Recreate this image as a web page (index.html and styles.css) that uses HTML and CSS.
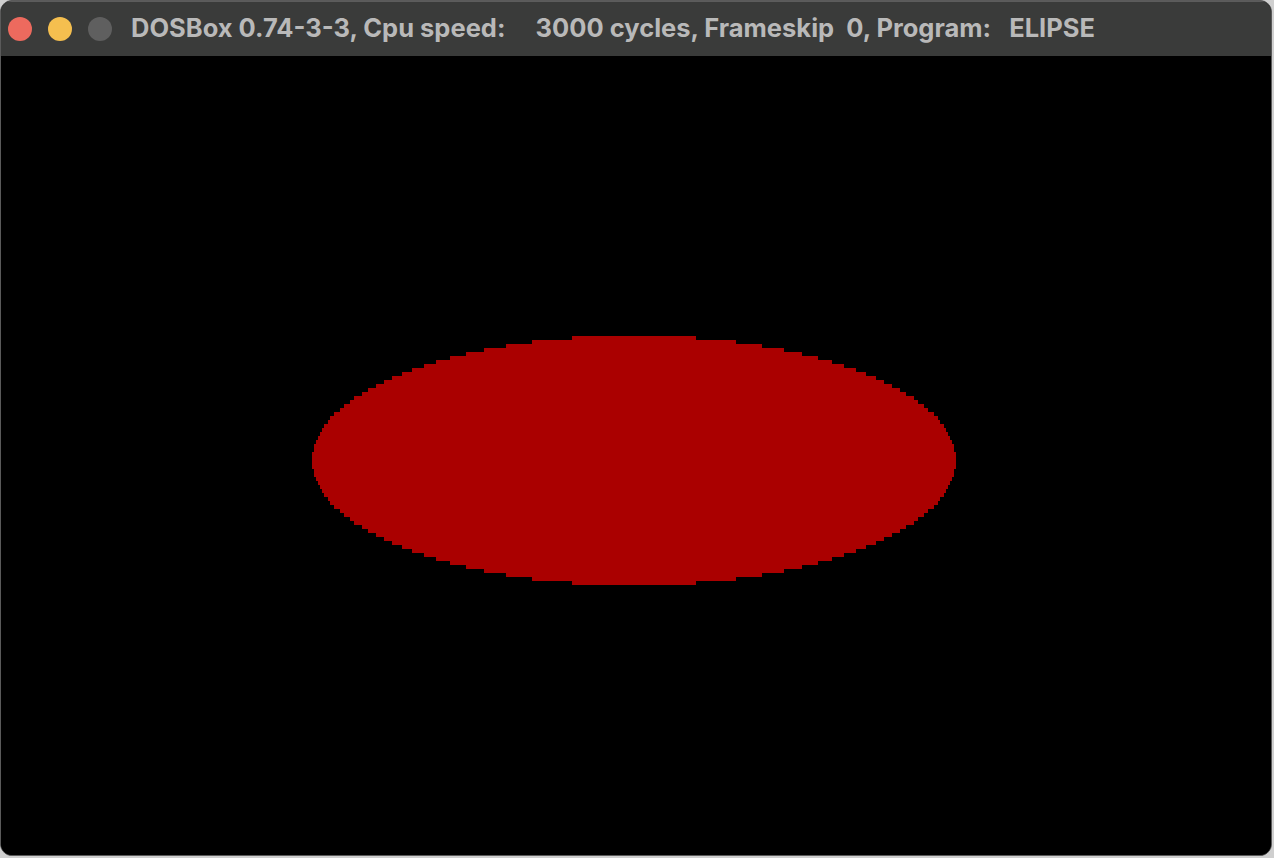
FILE: index.html
```html
<!DOCTYPE html>
<html>
<head>
<meta charset="utf-8">
<title>DOSBox</title>
<link rel="stylesheet" href="styles.css">
</head>
<body>
<div class="window">
  <div class="titlebar">
    <div class="lights">
      <span class="light close"></span>
      <span class="light min"></span>
      <span class="light zoom"></span>
    </div>
    <div class="title">DOSBox 0.74-3-3, Cpu speed:     3000 cycles, Frameskip  0, Program:   ELIPSE</div>
  </div>
  <div class="screen">
    <svg class="canvas" id="canvas" viewBox="1 56 1270 798" preserveAspectRatio="none" shape-rendering="crispEdges"></svg>
  </div>
</div>
<script src="script.js"></script>
</body>
</html>
```
FILE: styles.css
```css
html, body {
  margin: 0;
  padding: 0;
}
body {
  width: 1274px;
  height: 858px;
  background: #cfcfcf;
  overflow: hidden;
}
.window {
  width: 1272px;
  height: 856px;
  box-sizing: border-box;
  border: 1px solid #5a5a5a;
  border-radius: 12px;
  overflow: hidden;
  display: flex;
  flex-direction: column;
  background: #000;
}
.titlebar {
  height: 55px;
  flex: none;
  background: #3a3b3a;
  box-shadow: inset 0 1px 0 #5c5c5c;
  display: flex;
  align-items: center;
  padding-left: 7px;
  gap: 19px;
}
.lights {
  display: flex;
  gap: 16px;
}
.light {
  width: 24px;
  height: 24px;
  border-radius: 50%;
  display: block;
}
.close { background: #ed6a5e; }
.min { background: #f5bf4f; }
.zoom { background: #5f5f5f; }
.title {
  font-family: "Inter", "Open Sans", sans-serif;
  font-weight: 700;
  font-size: 25.5px;
  color: #b9b9b9;
  white-space: pre;
  margin-top: -3px;
}
.screen {
  flex: 1;
  position: relative;
  background: #000;
}
.canvas {
  position: absolute;
  left: 0;
  top: 0;
  width: 100%;
  height: 100%;
  display: block;
}
```
FILE: script.js
```js
(function () {
  var svg = document.getElementById('canvas');
  var ns = 'http://www.w3.org/2000/svg';
  var cx = 634, cy = 460, a = 322, b = 124.4;
  var d = '';
  for (var i = 0; i < 62; i++) {
    var y = 336 + 4 * i;
    var yc = y + 2 - cy;
    var t = 1 - (yc / b) * (yc / b);
    if (t <= 0) continue;
    var hw = Math.round(a * Math.sqrt(t) / 2) * 2;
    d += 'M' + (cx - hw) + ' ' + y + 'H' + (cx + hw) + 'V' + (y + 4) + 'H' + (cx - hw) + 'Z';
  }
  var p = document.createElementNS(ns, 'path');
  p.setAttribute('d', d);
  p.setAttribute('fill', '#aa0000');
  svg.appendChild(p);
})();
```
